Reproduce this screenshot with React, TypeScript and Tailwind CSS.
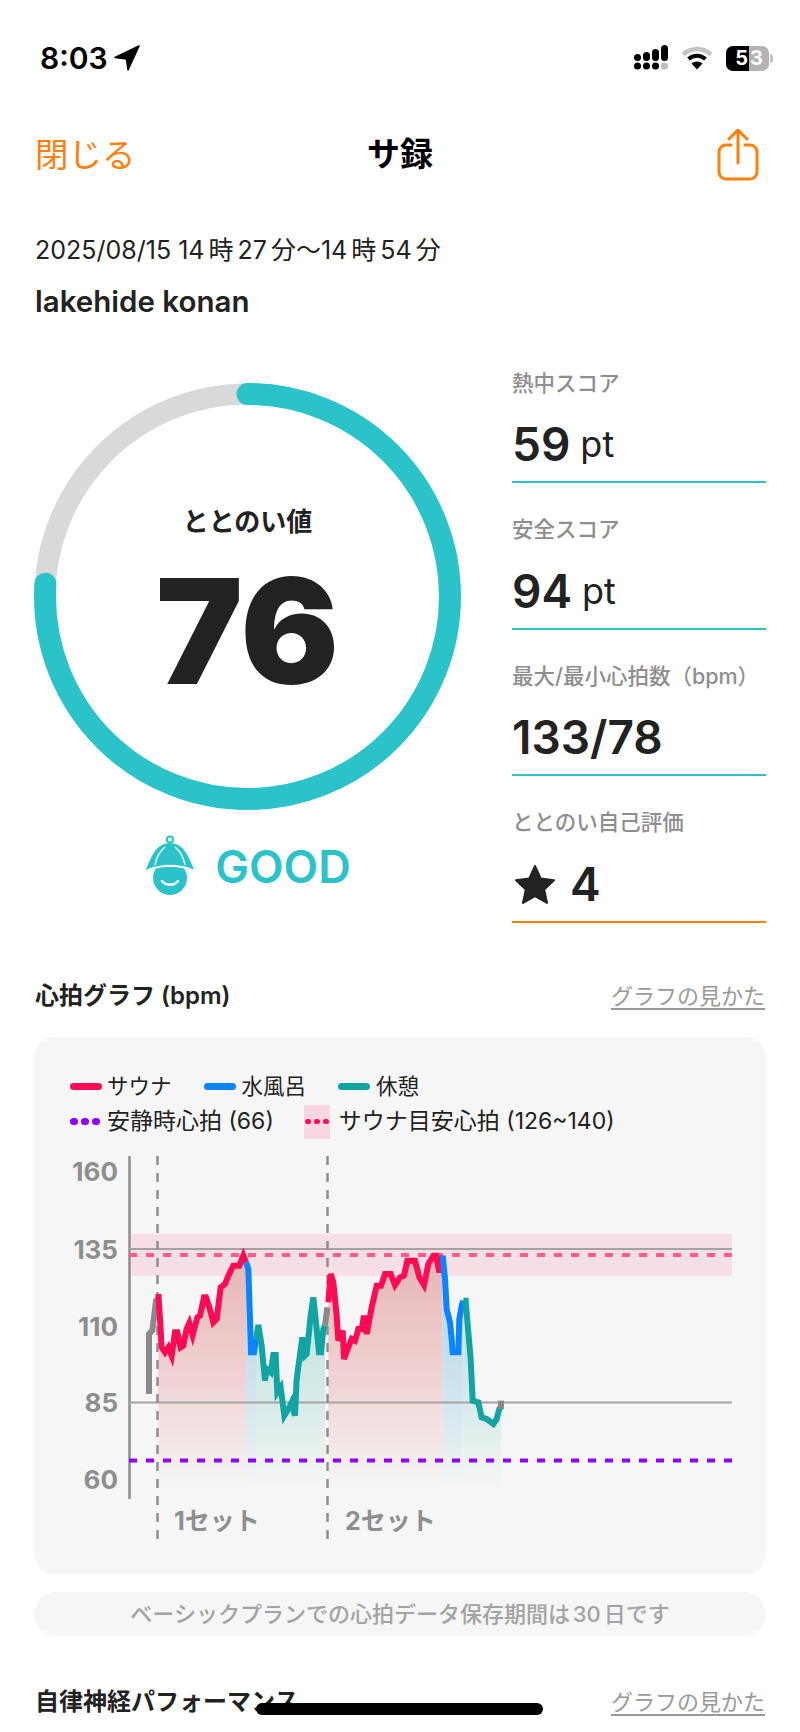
import React from 'react';

type Pt = [number, number];

const ORANGE = '#ff7f0a';
const TEAL = '#2ac3ca';

// points read off the reference, in two crop spaces
const a = (pts: Pt[]): Pt[] => pts.map(([x, y]) => [120 + x / 3, 1220 + y / 3]);
const b = (pts: Pt[]): Pt[] => pts.map(([x, y]) => [300 + x / 3, 1220 + y / 3]);

const gray1 = a([[87, 525], [87, 345], [97, 335], [108, 245], [113, 240]]);
const red1 = a([[115, 225], [120, 300], [125, 385], [135, 400], [145, 385], [155, 410], [165, 340], [172, 340], [182, 385], [190, 380], [200, 330], [208, 312], [218, 348], [232, 295], [240, 290], [252, 235], [258, 235], [268, 265], [280, 310], [290, 300], [302, 205], [315, 195], [325, 170], [340, 140], [358, 140], [370, 110], [378, 130]]);
const blue1 = a([[378, 130], [385, 150], [390, 300], [393, 400], [402, 400], [408, 360]]);
const teal1 = a([[408, 360], [415, 318], [425, 380], [435, 485], [440, 450], [452, 460], [460, 408], [467, 408], [472, 520], [482, 505], [493, 590], [508, 565], [515, 550], [525, 590], [530, 480], [547, 355], [555, 410], [560, 405], [572, 290], [580, 235], [587, 300], [597, 400], [603, 400], [610, 330], [615, 320]]);
const gray2 = a([[615, 320], [622, 265]]);
const red2 = [
  ...a([[625, 250], [632, 165], [640, 190], [650, 290], [655, 365], [668, 335], [672, 420], [685, 385], [695, 360], [705, 365]]),
  ...b([[175, 330], [185, 330], [192, 290], [200, 345], [215, 265], [230, 200], [243, 200], [255, 165], [272, 165], [285, 198], [300, 175], [312, 170], [322, 125], [345, 125], [358, 175], [372, 198], [385, 135], [400, 110], [408, 110], [418, 160], [428, 110]]),
] as Pt[];
const blue2 = b([[428, 110], [435, 180], [440, 270], [450, 310], [455, 360], [458, 400], [475, 400], [478, 300], [485, 260], [490, 245]]);
const teal2 = b([[490, 245], [497, 245], [505, 340], [512, 420], [518, 545], [535, 550], [545, 595], [560, 600], [580, 615], [590, 600], [598, 570], [603, 565]]);
const gray3 = b([[603, 570], [603, 545]]);

const line = (pts: Pt[]) => pts.map((p) => p.join(',')).join(' ');
const area = (pts: Pt[]) => `${pts[0][0]},1490 ${line(pts)} ${pts[pts.length - 1][0]},1490`;

function HeartChart() {
  const series: { pts: Pt[]; color: string; fill?: string }[] = [
    { pts: gray1, color: '#8a8a8a' },
    { pts: red1, color: '#ff0a54', fill: 'url(#fillRed)' },
    { pts: blue1, color: '#0a84ff', fill: 'url(#fillBlue)' },
    { pts: teal1, color: '#12a3a3', fill: 'url(#fillTeal)' },
    { pts: gray2, color: '#8a8a8a' },
    { pts: red2, color: '#ff0a54', fill: 'url(#fillRed)' },
    { pts: blue2, color: '#0a84ff', fill: 'url(#fillBlue)' },
    { pts: teal2, color: '#12a3a3', fill: 'url(#fillTeal)' },
    { pts: gray3, color: '#8a8a8a' },
  ];
  const labelClass = 'fill-[#8e8e8e] text-[26px] font-bold';
  return (
    <svg viewBox="34 1150 732 400" className="block w-[732px] h-[400px]">
      <defs>
        <linearGradient id="fillRed" gradientUnits="userSpaceOnUse" x1="0" y1="1270" x2="0" y2="1490">
          <stop offset="0" stopColor="#e8b8b8" />
          <stop offset="0.55" stopColor="#f1d6d6" />
          <stop offset="1" stopColor="#f6f6f6" />
        </linearGradient>
        <linearGradient id="fillBlue" gradientUnits="userSpaceOnUse" x1="0" y1="1300" x2="0" y2="1490">
          <stop offset="0" stopColor="#b5d9e8" />
          <stop offset="0.55" stopColor="#d3e6ee" />
          <stop offset="1" stopColor="#f6f6f6" />
        </linearGradient>
        <linearGradient id="fillTeal" gradientUnits="userSpaceOnUse" x1="0" y1="1310" x2="0" y2="1490">
          <stop offset="0" stopColor="#bfe4e0" />
          <stop offset="0.55" stopColor="#d9ecea" />
          <stop offset="1" stopColor="#f6f6f6" />
        </linearGradient>
      </defs>

      <text x="118" y="1182" textAnchor="end" className={labelClass}>160</text>
      <text x="118" y="1260" textAnchor="end" className={labelClass}>135</text>
      <text x="118" y="1337" textAnchor="end" className={labelClass}>110</text>
      <text x="118" y="1413" textAnchor="end" className={labelClass}>85</text>
      <text x="118" y="1490" textAnchor="end" className={labelClass}>60</text>

      <rect x="129" y="1235" width="603" height="42" fill="#f8dfe6" />

      {series.filter((s) => s.fill).map((s, i) => (
        <polygon key={i} points={area(s.pts)} fill={s.fill} />
      ))}

      <line x1="129.5" y1="1157" x2="129.5" y2="1500" stroke="#8e8e8e" strokeWidth="2.5" />
      <line x1="129" y1="1250" x2="732" y2="1250" stroke="#a3a3a3" strokeWidth="2" />
      <line x1="129" y1="1403.5" x2="732" y2="1403.5" stroke="#a3a3a3" strokeWidth="2" />
      <line x1="157.5" y1="1157" x2="157.5" y2="1543" stroke="#8e8e8e" strokeWidth="2.5" strokeDasharray="9 8" />
      <line x1="327.5" y1="1157" x2="327.5" y2="1543" stroke="#8e8e8e" strokeWidth="2.5" strokeDasharray="9 8" />

      <line x1="129" y1="1256" x2="732" y2="1256" stroke="#ff5c8a" strokeWidth="4" strokeDasharray="8 9" />
      <line x1="129" y1="1461.5" x2="732" y2="1461.5" stroke="#8f00ff" strokeWidth="4" strokeDasharray="8 9" />

      {series.map((s, i) => (
        <polyline key={i} points={line(s.pts)} fill="none" stroke={s.color} strokeWidth="6" strokeLinejoin="miter" />
      ))}

      <text x="174" y="1531" className="fill-[#8e8e8e] text-[25px] font-bold">1セット</text>
      <text x="345" y="1531" className="fill-[#8e8e8e] text-[25px] font-bold">2セット</text>
    </svg>
  );
}

function Stat({ label, color = TEAL, children }: { label: string; color?: string; children: React.ReactNode }) {
  return (
    <div className="h-[146.5px] flex flex-col">
      <div className="h-[30px] flex items-center text-[21.5px] font-medium text-[#8e8e8e] whitespace-nowrap">{label}</div>
      <div className="h-[72px] mt-[13px] pb-[4px] flex items-center gap-[10px] text-[46px] leading-none font-semibold text-[#222222] border-b-2" style={{ borderColor: color }}>
        {children}
      </div>
    </div>
  );
}

function SectionTitle({ title }: { title: string }) {
  return (
    <div className="flex items-center justify-between h-[36px] px-[35px]">
      <span className="text-[24px] font-semibold text-[#222222]">{title}</span>
      <span className="text-[22px] text-[#999999] underline underline-offset-4">グラフの見かた</span>
    </div>
  );
}

function StatusIcons() {
  return (
    <div className="flex items-center gap-[13px]">
      <svg width="34" height="26" viewBox="0 0 34 26">
        <circle cx="3.5" cy="21" r="3.5" fill="#000" />
        <circle cx="12.5" cy="21" r="3.5" fill="#000" />
        <circle cx="21.5" cy="21" r="3.5" fill="#000" />
        <circle cx="30.5" cy="21" r="3.5" fill="#bdbdbd" />
        <rect x="0" y="9" width="7" height="7" rx="3.5" fill="#000" />
        <rect x="9" y="7" width="7" height="9" rx="3.5" fill="#000" />
        <rect x="18" y="4" width="7" height="12" rx="3.5" fill="#000" />
        <rect x="27" y="0" width="7" height="16" rx="3.5" fill="#000" />
      </svg>
      <svg width="32" height="24" viewBox="0 0 32 24" fill="none">
        <path d="M2 8.5C10 1 22 1 30 8.5" stroke="#c4c4c4" strokeWidth="4.5" />
        <path d="M7.5 13C12.5 8.5 19.5 8.5 24.5 13" stroke="#000" strokeWidth="4" />
        <path d="M16 23.5L10.5 17.5C13.5 14.8 18.5 14.8 21.5 17.5Z" fill="#000" />
      </svg>
      <div className="flex items-center">
        <div className="w-[43px] h-[25px] rounded-[7px] overflow-hidden flex bg-[#b4b4b4] text-[20px] leading-[25px] font-bold text-white">
          <span className="w-[23px] bg-black text-right pr-[1px]">5</span>
          <span className="pl-[1px]">3</span>
        </div>
        <div className="w-[3px] h-[9px] ml-[1px] rounded-r-full bg-[#c4c4c4]" />
      </div>
    </div>
  );
}

export default function App() {
  return (
    <div className="relative w-[800px] h-[1732px] overflow-hidden bg-white text-[#222222] font-['Inter','Noto_Sans_CJK_JP',sans-serif]">
      <div className="h-[116px] flex items-center justify-between pl-[40px] pr-[27px]">
        <div className="flex items-center gap-[6px]">
          <span className="text-[30px] font-semibold text-black">8:03</span>
          <svg width="26" height="26" viewBox="0 0 26 26">
            <path d="M25 1L1 12.5L12.5 14L14 25Z" fill="#000" stroke="#000" strokeWidth="1.5" strokeLinejoin="round" />
          </svg>
        </div>
        <StatusIcons />
      </div>

      <div className="h-[78px] flex items-center justify-between px-[35px]">
        <span className="w-[110px] text-[33.5px] whitespace-nowrap" style={{ color: ORANGE }}>閉じる</span>
        <span className="text-[33px] font-bold text-black">サ録</span>
        <div className="w-[110px] pr-[6px] flex justify-end">
          <svg width="42" height="52" viewBox="0 0 42 52" fill="none" stroke={ORANGE} strokeWidth="3" strokeLinecap="round" strokeLinejoin="round">
            <path d="M14 16H9a7 7 0 0 0-7 7v20a7 7 0 0 0 7 7h24a7 7 0 0 0 7-7V23a7 7 0 0 0-7-7h-5" />
            <path d="M21 34V2M12 10l9-9 9 9" />
          </svg>
        </div>
      </div>

      <div className="px-[35px] mt-[38px]">
        <div className="text-[25px] leading-[36px] text-[#222222] whitespace-nowrap [word-spacing:-3px]">
          <span className="mr-[3px]">2025/08/15</span> 14 時 27 分〜14 時 54 分
        </div>
        <div className="text-[29.5px] leading-[36px] mt-[15px] font-semibold">lakehide konan</div>
      </div>

      <div className="flex pl-[34px] mt-[64px]">
        <div>
          <div className="relative w-[427px] h-[427px]">
            <svg viewBox="0 0 427 427" className="block w-full h-full" fill="none">
              <circle cx="213.5" cy="213.5" r="202.5" stroke="#d9d9d9" strokeWidth="21" />
              <circle
                cx="213.5"
                cy="213.5"
                r="202.5"
                stroke={TEAL}
                strokeWidth="22"
                strokeLinecap="round"
                pathLength={100}
                strokeDasharray="76 100"
                transform="rotate(-90 213.5 213.5)"
              />
            </svg>
            <div className="absolute inset-0 flex flex-col items-center">
              <div className="mt-[121px] text-[26px] leading-[36px] font-semibold">ととのい値</div>
              <div className="mt-[16px] text-[146px] leading-[150px] font-black text-[#222222]">76</div>
            </div>
          </div>
          <div className="flex items-center justify-center gap-[17px] mt-[25px]">
            <svg width="54" height="62" viewBox="0 0 54 62">
              <circle cx="26" cy="4.5" r="3" fill="none" stroke={TEAL} strokeWidth="2" />
              <path d="M26 8C12 8 7 22 1 37C17 29 35 29 51 37C45 22 40 8 26 8Z" fill={TEAL} />
              <circle cx="26" cy="43" r="17" fill={TEAL} />
              <path d="M21 12C15 17 12 24 11 30M31 12C37 17 40 24 41 30" fill="none" stroke="#fff" strokeWidth="1.5" />
              <path d="M0 37C6 34 10 32 15 32C20 31 23 30 26 31C30 30 33 31 37 32C42 32 46 34 52 37" fill="none" stroke="#fff" strokeWidth="2" />
              <path d="M18 46C22 51 30 51 34 46" fill="none" stroke="#fff" strokeWidth="2.5" strokeLinecap="round" />
            </svg>
            <span className="text-[45px] leading-none font-semibold" style={{ color: TEAL }}>GOOD</span>
          </div>
        </div>

        <div className="w-[254px] ml-[51px] -mt-[15px]">
          <Stat label="熱中スコア">
            <span>59</span>
            <span className="text-[36px] font-normal">pt</span>
          </Stat>
          <Stat label="安全スコア">
            <span>94</span>
            <span className="text-[36px] font-normal">pt</span>
          </Stat>
          <Stat label="最大/最小心拍数（bpm）">
            <span>133/78</span>
          </Stat>
          <Stat label="ととのい自己評価" color={ORANGE}>
            <svg width="42" height="40" viewBox="0 0 42 40" className="ml-[2px]">
              <path d="M21 2L26.8 14.6L40 16.2L30.2 25.5L33 39L21 32.2L9 39L11.8 25.5L2 16.2L15.2 14.6Z" fill="#222222" stroke="#222222" strokeWidth="2" strokeLinejoin="round" />
            </svg>
            <span className="ml-[4px]">4</span>
          </Stat>
        </div>
      </div>

      <div className="mt-[24px]">
        <SectionTitle title="心拍グラフ (bpm)" />
      </div>

      <div className="mx-[34px] mt-[23px] h-[537px] rounded-[20px] bg-[#f6f6f6] flex flex-col">
        <div className="pl-[36px] pt-[32px] text-[#222222]">
          <div className="flex items-center h-[35px] text-[21.5px]">
            <span className="w-[32px] h-[7px] rounded-full bg-[#ff0a54] mr-[5px]" />
            <span>サウナ</span>
            <span className="w-[32px] h-[7px] rounded-full bg-[#0a84ff] ml-[32px] mr-[6px]" />
            <span>水風呂</span>
            <span className="w-[32px] h-[7px] rounded-full bg-[#12a3a3] ml-[32px] mr-[6px]" />
            <span>休憩</span>
          </div>
          <div className="flex items-center h-[35px] text-[23px]">
            <span className="flex gap-[3px] w-[32px] mr-[5px]">
              <i className="w-[8px] h-[7px] rounded-full bg-[#8f00ff]" />
              <i className="w-[8px] h-[7px] rounded-full bg-[#8f00ff]" />
              <i className="w-[8px] h-[7px] rounded-full bg-[#8f00ff]" />
            </span>
            <span>安静時心拍 (66)</span>
            <span className="flex items-center justify-center gap-[3px] w-[26px] h-[34px] bg-[#f8d7e1] ml-[30px] mr-[9px]">
              <i className="w-[6px] h-[5px] rounded-full bg-[#ff0a54]" />
              <i className="w-[6px] h-[5px] rounded-full bg-[#ff0a54]" />
              <i className="w-[6px] h-[5px] rounded-full bg-[#ff0a54]" />
            </span>
            <span>サウナ目安心拍 (126~140)</span>
          </div>
        </div>
        <div className="mt-[10px]">
          <HeartChart />
        </div>
      </div>

      <div className="mx-[34px] mt-[18px] h-[44px] rounded-full bg-[#f6f6f6] flex items-center justify-center text-[22px] font-medium text-[#a3a3a3] [word-spacing:-3px]">
        ベーシックプランでの心拍データ保存期間は 30 日です
      </div>

      <div className="mt-[48px]">
        <SectionTitle title="自律神経パフォーマンス" />
      </div>

      <div className="absolute left-[256px] top-[1703px] w-[287px] h-[12px] rounded-full bg-black" />
    </div>
  );
}
